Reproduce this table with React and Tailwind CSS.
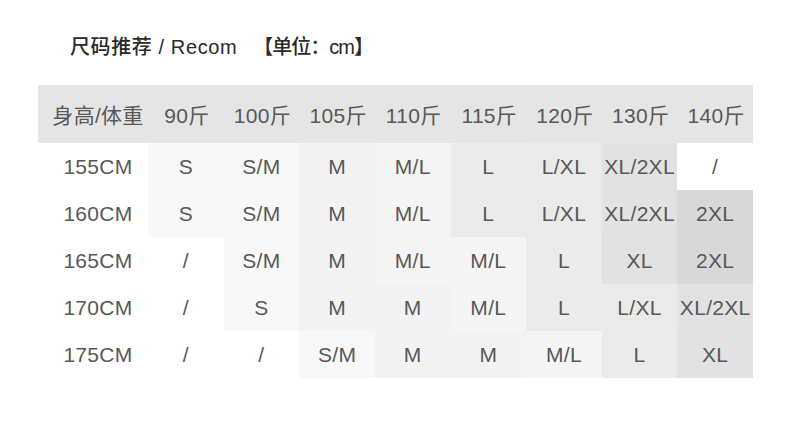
const weights = ["90斤", "100斤", "105斤", "110斤", "115斤", "120斤", "130斤", "140斤"];

const rows = [
  { height: "155CM", sizes: ["S", "S/M", "M", "M/L", "L", "L/XL", "XL/2XL", "/"] },
  { height: "160CM", sizes: ["S", "S/M", "M", "M/L", "L", "L/XL", "XL/2XL", "2XL"] },
  { height: "165CM", sizes: ["/", "S/M", "M", "M/L", "M/L", "L", "XL", "2XL"] },
  { height: "170CM", sizes: ["/", "S", "M", "M", "M/L", "L", "L/XL", "XL/2XL"] },
  { height: "175CM", sizes: ["/", "/", "S/M", "M", "M", "M/L", "L", "XL"] },
];

// shade follows the size
const shade = {
  "/": "bg-white",
  S: "bg-[#f8f8f8]",
  "S/M": "bg-[#f8f8f8]",
  M: "bg-[#f3f3f3]",
  "M/L": "bg-[#f5f5f5]",
  L: "bg-[#ebebeb]",
  "L/XL": "bg-[#eaeaea]",
  XL: "bg-[#e2e2e2]",
  "XL/2XL": "bg-[#e2e2e2]",
  "2XL": "bg-[#d8d8d8]",
};

export default function App() {
  return (
    <div className="h-[427px] w-[790px] overflow-hidden bg-white font-['Liberation_Sans','Noto_Sans_CJK_SC',sans-serif]">
      <h1 className="pl-[70px] pt-[36px] text-[20px] leading-[22px] font-medium tracking-[0.6px] text-[#2a2a2a]">
        尺码推荐 / Recom
        <span className="ml-[16px] tracking-[-1px]">【单位：cm】</span>
      </h1>

      <div className="ml-[38px] mt-[27px] w-[715px] text-[21px] tracking-[0.3px] text-[#585858]">
        <div className="grid h-[58px] grid-cols-[110px_repeat(8,1fr)] items-center bg-[#e5e5e5] pt-[4px] text-center">
          <div className="pl-[10px]">身高/体重</div>
          {weights.map((w) => (
            <div key={w} className="pl-[2px]">{w}</div>
          ))}
        </div>

        {rows.map((row) => (
          <div key={row.height} className="grid h-[47px] grid-cols-[110px_repeat(8,1fr)] text-center">
            <div className="flex items-center justify-center pl-[10px]">{row.height}</div>
            {row.sizes.map((s, i) => (
              <div key={i} className={`flex items-center justify-center ${shade[s]}`}>
                {s}
              </div>
            ))}
          </div>
        ))}
      </div>
    </div>
  );
}
